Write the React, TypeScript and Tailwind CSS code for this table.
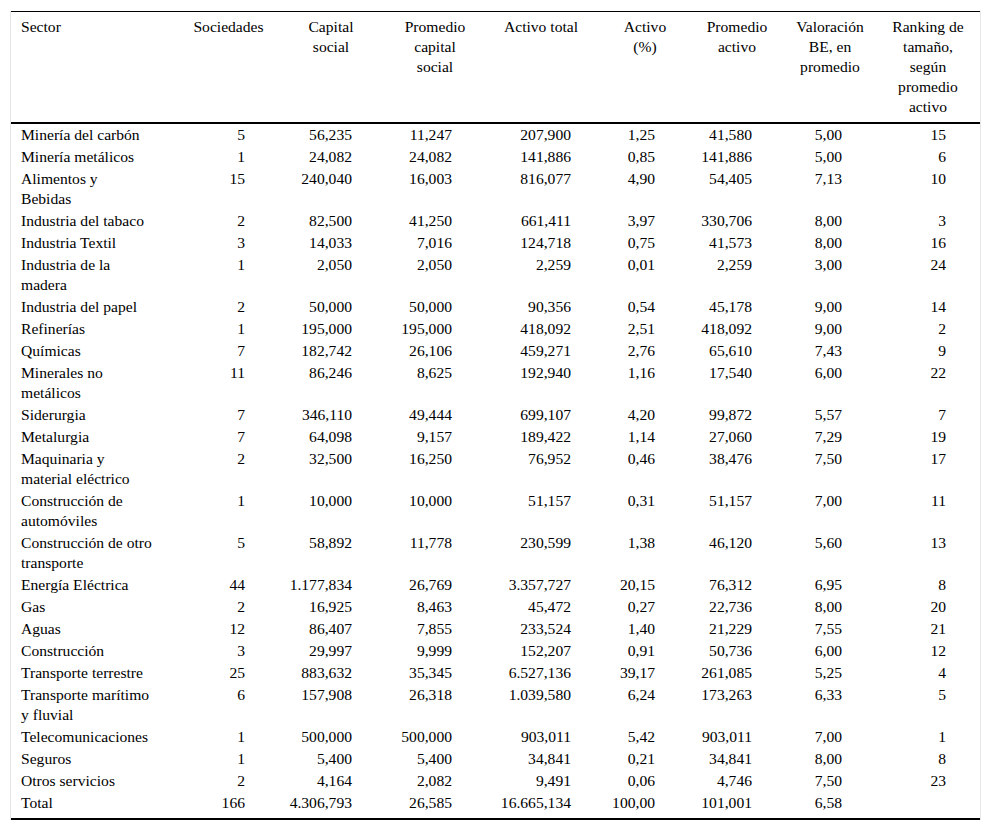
import React from "react";

type Row = { s: React.ReactNode; v: string[] };

const rows: Row[] = [
  { s: "Minería del carbón", v: ["5", "56,235", "11,247", "207,900", "1,25", "41,580", "5,00", "15"] },
  { s: "Minería metálicos", v: ["1", "24,082", "24,082", "141,886", "0,85", "141,886", "5,00", "6"] },
  { s: <>Alimentos y<br />Bebidas</>, v: ["15", "240,040", "16,003", "816,077", "4,90", "54,405", "7,13", "10"] },
  { s: "Industria del tabaco", v: ["2", "82,500", "41,250", "661,411", "3,97", "330,706", "8,00", "3"] },
  { s: "Industria Textil", v: ["3", "14,033", "7,016", "124,718", "0,75", "41,573", "8,00", "16"] },
  { s: <>Industria de la<br />madera</>, v: ["1", "2,050", "2,050", "2,259", "0,01", "2,259", "3,00", "24"] },
  { s: "Industria del papel", v: ["2", "50,000", "50,000", "90,356", "0,54", "45,178", "9,00", "14"] },
  { s: "Refinerías", v: ["1", "195,000", "195,000", "418,092", "2,51", "418,092", "9,00", "2"] },
  { s: "Químicas", v: ["7", "182,742", "26,106", "459,271", "2,76", "65,610", "7,43", "9"] },
  { s: <>Minerales no<br />metálicos</>, v: ["11", "86,246", "8,625", "192,940", "1,16", "17,540", "6,00", "22"] },
  { s: "Siderurgia", v: ["7", "346,110", "49,444", "699,107", "4,20", "99,872", "5,57", "7"] },
  { s: "Metalurgia", v: ["7", "64,098", "9,157", "189,422", "1,14", "27,060", "7,29", "19"] },
  { s: <>Maquinaria y<br />material eléctrico</>, v: ["2", "32,500", "16,250", "76,952", "0,46", "38,476", "7,50", "17"] },
  { s: <>Construcción de<br />automóviles</>, v: ["1", "10,000", "10,000", "51,157", "0,31", "51,157", "7,00", "11"] },
  { s: <>Construcción de otro<br />transporte</>, v: ["5", "58,892", "11,778", "230,599", "1,38", "46,120", "5,60", "13"] },
  { s: "Energía Eléctrica", v: ["44", "1.177,834", "26,769", "3.357,727", "20,15", "76,312", "6,95", "8"] },
  { s: "Gas", v: ["2", "16,925", "8,463", "45,472", "0,27", "22,736", "8,00", "20"] },
  { s: "Aguas", v: ["12", "86,407", "7,855", "233,524", "1,40", "21,229", "7,55", "21"] },
  { s: "Construcción", v: ["3", "29,997", "9,999", "152,207", "0,91", "50,736", "6,00", "12"] },
  { s: "Transporte terrestre", v: ["25", "883,632", "35,345", "6.527,136", "39,17", "261,085", "5,25", "4"] },
  { s: <>Transporte marítimo<br />y fluvial</>, v: ["6", "157,908", "26,318", "1.039,580", "6,24", "173,263", "6,33", "5"] },
  { s: "Telecomunicaciones", v: ["1", "500,000", "500,000", "903,011", "5,42", "903,011", "7,00", "1"] },
  { s: "Seguros", v: ["1", "5,400", "5,400", "34,841", "0,21", "34,841", "8,00", "8"] },
  { s: "Otros servicios", v: ["2", "4,164", "2,082", "9,491", "0,06", "4,746", "7,50", "23"] },
  { s: "Total", v: ["166", "4.306,793", "26,585", "16.665,134", "100,00", "101,001", "6,58", ""] },
];

const colW = [
  "w-[172px]",
  "w-[91px]",
  "w-[114px]",
  "w-[94px]",
  "w-[118px]",
  "w-[90px]",
  "w-[94px]",
  "w-[92px]",
  "w-[104px]",
];

const dataPad = [
  "pr-[29px]",
  "pr-[36px]",
  "pr-[30px]",
  "pr-[29px]",
  "pr-[35px]",
  "pr-[32px]",
  "pr-[34px]",
  "pr-[34px]",
];

const headers: React.ReactNode[] = [
  "Sociedades",
  <>Capital<br />social</>,
  <>Promedio<br />capital<br />social</>,
  "Activo total",
  <>Activo<br />(%)</>,
  <>Promedio<br />activo</>,
  <>Valoración<br />BE, en<br />promedio</>,
  <>Ranking de<br />tamaño,<br />según<br />promedio<br />activo</>,
];

export default function App() {
  return (
    <div className="min-h-[831px] w-[992px] bg-white pt-[11px] pl-[10px] text-black font-['Liberation_Serif','Times_New_Roman',serif]">
      <div className="w-[971px] border-x border-[#e6e6e6]">
        <table className="w-[969px] table-fixed border-collapse text-[15.6px] leading-[20px] font-['Liberation_Serif','Times_New_Roman',serif]">
          <colgroup>
            {colW.map((w, i) => (
              <col key={i} className={w} />
            ))}
          </colgroup>
          <thead>
            <tr className="border-t border-b-2 border-black">
              <th className="pl-[10px] pt-[5px] pb-[5px] text-left align-top font-normal">Sector</th>
              {headers.map((h, i) => (
                <th key={i} className="pt-[5px] pb-[5px] text-center align-top font-normal">
                  {h}
                </th>
              ))}
            </tr>
          </thead>
          <tbody>
            {rows.map((r, ri) => {
              const last = ri === rows.length - 1;
              return (
                <tr key={ri} className={last ? "border-b-2 border-black" : ""}>
                  <td className={`pl-[10px] pt-[1px] text-left align-top ${last ? "pb-[5px]" : "pb-[1px]"}`}>{r.s}</td>
                  {r.v.map((v, ci) => (
                    <td key={ci} className={`pt-[1px] text-right align-top ${dataPad[ci]} ${last ? "pb-[5px]" : "pb-[1px]"}`}>
                      {v}
                    </td>
                  ))}
                </tr>
              );
            })}
          </tbody>
        </table>
      </div>
    </div>
  );
}
